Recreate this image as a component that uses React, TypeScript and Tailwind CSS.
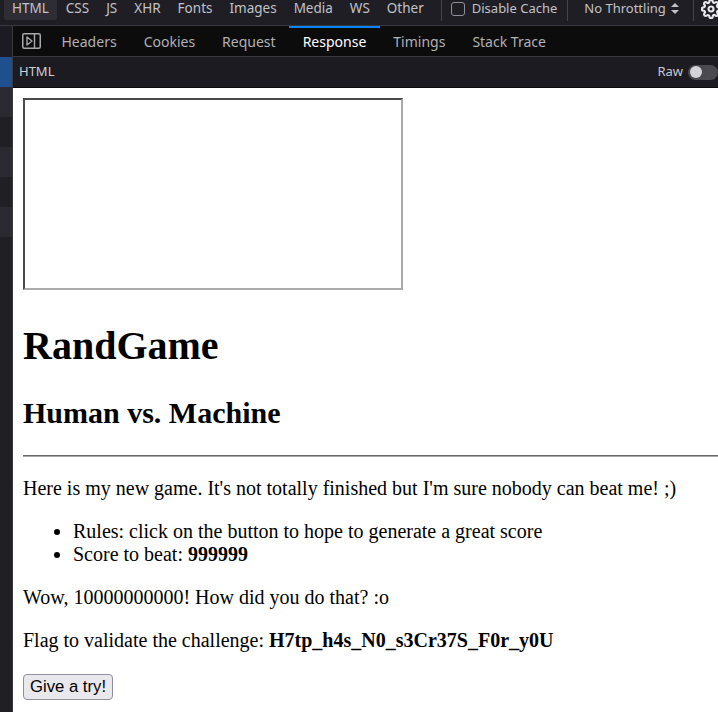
import { FiSettings } from "react-icons/fi";

const FILTERS = ["HTML", "CSS", "JS", "XHR", "Fonts", "Images", "Media", "WS", "Other"];
const TABS = ["Headers", "Cookies", "Request", "Response", "Timings", "Stack Trace"];

function TopBar() {
  return (
    <div className="flex h-[26px] items-start whitespace-nowrap border-b border-[#38383d] bg-[#1f1e24] pl-[4px] text-[13.5px] leading-[16px] text-[#c2c2c9]">
      {FILTERS.map((f, i) => (
        <div
          key={f}
          className={`h-[20px] shrink-0 px-2 ${i === 0 ? "rounded-b-[2px] bg-[#2e2d35]" : ""} ${i > 0 ? "ml-[1px]" : ""}`}
        >
          {f}
        </div>
      ))}
      <div className="ml-[9px] h-[21px] w-px shrink-0 bg-[#45444c]" />
      <div className="ml-[9px] flex h-[18px] shrink-0 items-start text-[13px]">
        <span className="mt-[2px] h-[14px] w-[14px] rounded-[3px] border-[1.5px] border-[#8f8f9d]" />
        <span className="ml-[7px]">Disable Cache</span>
      </div>
      <div className="ml-[10px] h-[21px] w-px shrink-0 bg-[#45444c]" />
      <div className="ml-[16px] flex shrink-0 items-start text-[13px]">
        <span>No Throttling</span>
        <svg width="8" height="11" viewBox="0 0 8 11" className="ml-[5px] mt-[3px]">
          <path d="M4 0 L8 4 L0 4 Z M0 7 L8 7 L4 11 Z" fill="#c2c2c9" />
        </svg>
      </div>
      <div className="ml-[14px] h-[21px] w-px shrink-0 bg-[#45444c]" />
      <FiSettings className="ml-[7px] -mt-[1px] shrink-0 text-[#e6e6ea]" size={20} strokeWidth={2.6} />
    </div>
  );
}

function Sidebar() {
  return (
    <div className="flex w-[13px] shrink-0 flex-col border-r border-[#3a3a3f] bg-[#202024]">
      <div className="h-[31px] bg-[#1c1b22]" />
      <div className="h-[30px] bg-[#1f4f8c]" />
      <div className="h-[30px] bg-[#2b2a30]" />
      <div className="h-[30px] bg-[#202024]" />
      <div className="h-[30px] bg-[#2b2a30]" />
      <div className="h-[30px] bg-[#202024]" />
      <div className="h-[30px] bg-[#2b2a30]" />
      <div className="flex-1 bg-[#202024]" />
    </div>
  );
}

function TabsBar() {
  return (
    <div className="flex h-[31px] items-stretch whitespace-nowrap border-b border-[#38383d] bg-[#0c0c0d] text-[14px] text-[#b1b1b3]">
      <div className="flex w-[35px] items-center justify-center">
        <svg width="19" height="16" viewBox="0 0 19 16" className="ml-[1px]">
          <rect x="0.75" y="0.75" width="17.5" height="14.5" rx="1.5" fill="none" stroke="#a8a8ad" strokeWidth="1.5" />
          <path d="M5 4 L10 8 L5 12 Z" fill="none" stroke="#a8a8ad" strokeWidth="1.4" strokeLinejoin="round" />
          <line x1="12.5" y1="1" x2="12.5" y2="15" stroke="#a8a8ad" strokeWidth="1.4" />
        </svg>
      </div>
      {TABS.map((t) => (
        <div
          key={t}
          className={`flex items-center border-t-[2px] px-[13.5px] ${
            t === "Response" ? "border-[#0a84ff] text-white" : "border-transparent"
          }`}
        >
          <span className="-mt-[2px]">{t}</span>
        </div>
      ))}
    </div>
  );
}

function FormatBar() {
  return (
    <div className="flex h-[31px] items-center justify-between border-b border-[#0c0c0d] bg-[#1c1b22] pl-[6px] text-[13px] text-[#d0d0d5]">
      <span>HTML</span>
      <div className="flex items-center">
        <span className="text-[#c8c8ce]">Raw</span>
        <div className="ml-[5px] flex h-[15px] w-[30px] items-center rounded-full bg-[#4a4a50] pl-[2px]">
          <span className="h-[12px] w-[12px] rounded-full bg-[#d4d4d8]" />
        </div>
      </div>
    </div>
  );
}

function ResponsePreview() {
  return (
    <div className="flex-1 overflow-hidden bg-white pl-[10px] pt-[10px] font-['Liberation_Serif',serif] text-[20px] leading-[23px] text-black">
      <div className="h-[192px] w-[380px] border-[2px] border-b-[#aaaaaa] border-l-[#4a4a4a] border-r-[#aaaaaa] border-t-[#4a4a4a]" />
      <div className="h-[6px]" />
      <h1 className="mt-[27px] text-[40px] font-bold leading-[46px]">RandGame</h1>
      <h2 className="mt-[27px] text-[30px] font-bold leading-[34px]">Human vs. Machine</h2>
      <div className="mt-[25px] h-[2px] w-[800px] border-b border-t border-b-[#a8a8a8] border-t-[#6a6a6a]" />
      <p className="mt-[20px]">Here is my new game. It's not totally finished but I'm sure nobody can beat me! ;)</p>
      <ul className="mt-[20px] list-disc pl-[50px]">
        <li>Rules: click on the button to hope to generate a great score</li>
        <li>
          Score to beat: <b>999999</b>
        </li>
      </ul>
      <p className="mt-[20px]">Wow, 10000000000! How did you do that? :o</p>
      <p className="mt-[20px]">
        Flag to validate the challenge: <b>H7tp_h4s_N0_s3Cr37S_F0r_y0U</b>
      </p>
      <div className="mt-[22px]">
        <button className="h-[26px] rounded-[4px] border border-[#8f8f9d] bg-[#e9e9ed] px-[6px] font-['Liberation_Sans',sans-serif] text-[16.7px] leading-[20px] text-black">
          Give a try!
        </button>
      </div>
    </div>
  );
}

export default function App() {
  return (
    <div className="flex h-[712px] w-[718px] flex-col overflow-hidden bg-[#202024] font-['Noto_Sans',sans-serif]">
      <TopBar />
      <div className="flex flex-1 overflow-hidden">
        <Sidebar />
        <div className="flex min-w-0 flex-1 flex-col">
          <TabsBar />
          <FormatBar />
          <ResponsePreview />
        </div>
      </div>
    </div>
  );
}
